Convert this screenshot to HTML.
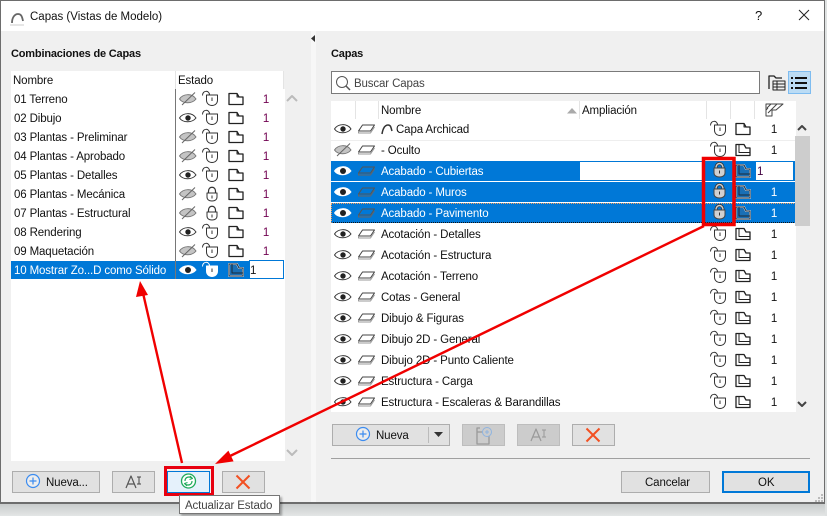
<!DOCTYPE html>
<html><head><meta charset="utf-8"><style>
html,body{margin:0;padding:0}
body{width:827px;height:516px;position:relative;overflow:hidden;background:#dfe2e2;font:11.5px/16px "Liberation Sans",sans-serif;color:#111}
div{position:absolute;box-sizing:border-box}
.t{white-space:nowrap;height:18px;line-height:18px;letter-spacing:-.13px}
.w{color:#fff}
.b{background:#e1e1e1;border:1px solid #adadad;text-align:center;height:22px;line-height:19px}
.d{background:#ccc;border-color:#bdbdbd}
.n{width:10px;text-align:center;color:#700050}
.m{width:10px;text-align:center;color:#111}
svg{position:absolute;left:0;top:0}
</style></head><body>
<div style="left:0;top:0;width:826px;height:504px;background:#f0f0f0;border:1px solid #6d6d6d;border-width:1px 2px 2px 1px"></div>
<div style="left:1px;top:1px;width:823px;height:30px;background:#fff"></div>
<div style="left:311px;top:31px;width:5px;height:471px;background:#f7f7f7"></div>
<div style="left:0;top:504px;width:827px;height:12px;background:linear-gradient(#c9cccc,#e3e6e6)"></div>
<div style="left:825px;top:0;width:2px;height:516px;background:#dfe2e2"></div>

<div style="left:11px;top:71px;width:272px;height:18px;background:#fff"></div>
<div style="left:11px;top:89px;width:274px;height:372px;background:#fff"></div>
<div style="left:11px;top:261px;width:164px;height:18px;background:#0078d7"></div>
<div style="left:176px;top:261px;width:73px;height:18px;background:#0078d7"></div>
<div style="left:249px;top:260px;width:35px;height:19px;background:#fff;border:1px solid #0078d7"></div>
<div style="left:175px;top:71px;width:1px;height:18px;background:#e4e4e4"></div>
<div style="left:175px;top:89px;width:1px;height:190px;background:#777"></div>
<div style="left:283px;top:71px;width:1px;height:18px;background:#e4e4e4"></div>

<div style="left:331px;top:71px;width:429px;height:23px;background:#fff;border:1px solid #7a7a7a"></div>
<div style="left:331px;top:101px;width:465px;height:311px;background:#fff"></div>
<div style="left:331px;top:140px;width:465px;height:1px;background:#eee"></div>
<div style="left:331px;top:161px;width:465px;height:20px;background:#0078d7"></div>
<div style="left:331px;top:182px;width:465px;height:20px;background:#0078d7"></div>
<div style="left:331px;top:203px;width:465px;height:20px;background:#0078d7;border:1px dotted #f0a060;border-bottom-color:#111"></div>
<div style="left:580px;top:162px;width:122px;height:18px;background:#fff"></div>
<div style="left:756px;top:162px;width:37px;height:18px;background:#fff"></div>
<div style="left:355px;top:101px;width:1px;height:18px;background:#e4e4e4"></div>
<div style="left:378px;top:101px;width:1px;height:18px;background:#e4e4e4"></div>
<div style="left:579px;top:101px;width:1px;height:18px;background:#e4e4e4"></div>
<div style="left:706px;top:101px;width:1px;height:18px;background:#e4e4e4"></div>
<div style="left:730px;top:101px;width:1px;height:18px;background:#e4e4e4"></div>
<div style="left:754px;top:101px;width:1px;height:18px;background:#e4e4e4"></div>
<div style="left:795px;top:136px;width:15px;height:90px;background:#cdcdcd"></div>
<div style="left:788px;top:71px;width:23px;height:23px;background:#bbdcf5;border:1px solid #7ebcf0"></div>

<div style="left:331px;top:458px;width:479px;height:1px;background:#a0a0a0"></div>

<div class="b" style="left:12px;top:471px;width:88px"></div>
<div class="b" style="left:112px;top:471px;width:43px"></div>
<div class="b" style="left:167px;top:471px;width:43px;background:#e5f1fb;border-color:#0078d7"></div>
<div style="left:164px;top:466px;width:50px;height:30px;border:3px solid #e8000f"></div>
<div class="b" style="left:222px;top:471px;width:43px"></div>
<div class="b" style="left:332px;top:424px;width:118px"></div>
<div style="left:428px;top:427px;width:1px;height:16px;background:#bbb"></div>
<div class="b d" style="left:462px;top:424px;width:43px"></div>
<div class="b d" style="left:517px;top:424px;width:43px"></div>
<div class="b" style="left:572px;top:424px;width:43px"></div>
<div class="b" style="left:621px;top:471px;width:89px"></div>
<div class="b" style="left:722px;top:471px;width:88px;border:2px solid #0078d7"></div>
<div style="left:179px;top:495px;width:101px;height:19px;background:#fff;border:1px solid #767676;box-shadow:2px 2px 2px rgba(0,0,0,.3)"></div>

<svg width="827" height="516" viewBox="0 0 827 516" fill="none" stroke-linejoin="round">
<defs>
<g id="e"><path d="M-8.500 0C-5 -5.500 4 -6 8 0C4 5 -5 5 -8.500 0Z" fill="#fff" stroke="#333"/><circle r="2.700" fill="#222"/></g>
<g id="ew"><path d="M-8.500 0C-5 -5.500 4 -6 8 0C4 5 -5 5 -8.500 0Z" fill="#fff" stroke="#fff"/><circle r="3" fill="#222"/></g>
<g id="x"><path d="M-8.500 0C-5 -5.500 4 -6 8 0C4 5 -5 5 -8.500 0Z" fill="#c4c4c4" stroke="#777"/><path d="M-6 6L7 -6.500" stroke="#666"/></g>
<g id="l"><path d="M-3.500 -4H7.500V1C7.500 4.500 5 6.500 2 6.500S-3.500 4.500 -3.500 1Z" fill="#fff" stroke="#333"/><path d="M-7.500 -3.500C-7.500 -9 -.5 -9 -.5 -4" stroke="#333"/><path d="M2 -1.500V2" stroke="#333"/></g>
<g id="lw"><path d="M-3.500 -4H7.500V1C7.500 4.500 5 6.500 2 6.500S-3.500 4.500 -3.500 1Z" fill="#fff" stroke="#fff"/><path d="M-7.500 -3.500C-7.500 -9 -.5 -9 -.5 -4" stroke="#fff"/><path d="M2 -1.500V2" stroke="#333"/></g>
<g id="c"><path d="M-3.500 -3C-3.500 -9 3.500 -9 3.500 -3" stroke="#333" stroke-width="3"/><path d="M-3.500 -3C-3.500 -9 3.500 -9 3.500 -3" stroke="#ccc" stroke-width="1.400"/><path d="M-5.500 -3H5.500V2C5.500 4.500 3 6 0 6S-5.500 4.500 -5.500 2Z" fill="#d0d0d0" stroke="#444"/><path d="M0 -.5V2.500" stroke="#333"/></g>
<g id="cd"><path d="M-3.500 -1V-3C-3.500 -8 3.500 -8 3.500 -3V-1" stroke="#333" stroke-width="1.200"/><path d="M-5 -1H5V3C5 5.500 3 7 0 7S-5 5.500 -5 3Z" fill="#fff" stroke="#333"/><path d="M0 1.500V4.500" stroke="#333"/></g>
<g id="p"><path d="M-7 -5.500H1L3 -2H7V5.500H-7Z" fill="#fff" stroke="#222" stroke-width="1.300"/><path d="M1 -5.500V-2H3" stroke="#222"/></g>
<g id="q"><path d="M-7 -5.500H1L3 -2H7V5.500H-7Z" fill="#fff" stroke="#222" stroke-width="1.300"/><path d="M-4 -5.500V2.500H7" stroke="#222"/></g>
<g id="qs"><path d="M-7 -6H1L3 -2H7V6H-7Z" fill="#1a6fb5" stroke="#cfe0f0" stroke-width="2"/><path d="M-7 -6H1L3 -2H7V6H-7Z" stroke="#1c2a38" stroke-width="1"/><path d="M-4 -6V3H7" stroke="#1c2a38"/></g>
<g id="a"><path d="M-4.500 -4H7.500L3.500 2H-8.500Z" fill="#fff" stroke="#444"/><path d="M-8.500 2V4H3.500L7.500 -2" stroke="#999"/></g>
<g id="as"><path d="M-4.500 -4H7.500L3.500 2H-8.500Z" stroke="#555"/><path d="M-8.500 2.500V4H3.500L7.500 -2" stroke="#666"/></g>
<g id="o"><circle r="6.500" stroke="#3c8cf0" stroke-width="1.200" fill="#fff" fill-opacity=".4"/><path d="M-3.500 0H3.500M0 -3.500V3.500" stroke="#3c8cf0" stroke-width="1.200"/></g>
<g id="rx"><path d="M-6.500 -6.500L6.500 6.500M6.500 -6.500L-6.500 6.500" stroke="#f25022" stroke-width="2"/></g>
<g id="u"><path d="M-5 3L0 -2L5 3" stroke="#bbb" stroke-width="2"/></g>
</defs>

<path d="M12 23C12 17 15 14 18 14C21 14 22 16 23 21" stroke="#666" stroke-width="1.800"/>
<path d="M10 25H24" stroke="#e6e6e6" stroke-width="2"/>
<path d="M799 10L809 20M809 10L799 20" stroke="#222"/>
<path d="M315 35V42L311 38.500Z" fill="#333"/>

<use href="#x" x="188" y="99"/><use href="#l" x="210" y="99"/><use href="#p" x="236" y="99"/>
<use href="#e" x="188" y="118"/><use href="#l" x="210" y="118"/><use href="#p" x="236" y="118"/>
<use href="#x" x="188" y="137"/><use href="#l" x="210" y="137"/><use href="#p" x="236" y="137"/>
<use href="#x" x="188" y="156"/><use href="#l" x="210" y="156"/><use href="#p" x="236" y="156"/>
<use href="#e" x="188" y="175"/><use href="#l" x="210" y="175"/><use href="#p" x="236" y="175"/>
<use href="#x" x="188" y="194"/><use href="#cd" x="212" y="194"/><use href="#p" x="236" y="194"/>
<use href="#x" x="188" y="213"/><use href="#cd" x="212" y="213"/><use href="#p" x="236" y="213"/>
<use href="#e" x="188" y="232"/><use href="#l" x="210" y="232"/><use href="#p" x="236" y="232"/>
<use href="#x" x="188" y="251"/><use href="#l" x="210" y="251"/><use href="#p" x="236" y="251"/>
<use href="#ew" x="188" y="270"/><use href="#lw" x="210" y="270"/><use href="#qs" x="236" y="270"/>
<use href="#u" x="292" y="98"/>
<path d="M287 450L292 455L297 450" stroke="#bbb" stroke-width="2"/>

<circle cx="342" cy="82" r="5.500" stroke="#555" fill="#fff"/><path d="M346 86L350 90" stroke="#555" stroke-width="1.500"/>
<path d="M769 89V76H774L776 78H782" stroke="#222" stroke-width="1.300"/><path d="M773 81H785V90H773Z" stroke="#222"/><path d="M773 84H785M773 87H785M777 81V90" stroke="#222"/>
<path d="M791 78H793M795 78H807M791 83H793M795 83H807M791 88H793M795 88H807" stroke="#111" stroke-width="2"/>
<path d="M567 113.500L572 108L577 113.500Z" fill="#aaa"/>
<path d="M766 104H783L776 110H772V116H766Z" fill="#fff" stroke="#444"/><path d="M767 108L771 104M768 113L777 104M766 110L768 108" stroke="#444"/>
<path d="M798 130L802 126L806 130" stroke="#444" stroke-width="2"/>
<path d="M798 402L802 406L806 402" stroke="#444" stroke-width="2"/>

<use href="#e" x="343" y="129"/><use href="#a" x="367" y="129"/><use href="#l" x="718" y="129"/><use href="#p" x="743" y="129"/>
<use href="#x" x="343" y="150"/><use href="#a" x="367" y="150"/><use href="#l" x="718" y="150"/><use href="#q" x="743" y="150"/>
<use href="#ew" x="343" y="171"/><use href="#as" x="367" y="171"/><use href="#c" x="719.500" y="171"/><use href="#qs" x="743" y="171"/>
<use href="#ew" x="343" y="192"/><use href="#as" x="367" y="192"/><use href="#c" x="719.500" y="192"/><use href="#qs" x="743" y="192"/>
<use href="#ew" x="343" y="213"/><use href="#as" x="367" y="213"/><use href="#c" x="719.500" y="213"/><use href="#qs" x="743" y="213"/>
<use href="#e" x="343" y="234"/><use href="#a" x="367" y="234"/><use href="#l" x="718" y="234"/><use href="#q" x="743" y="234"/>
<use href="#e" x="343" y="255"/><use href="#a" x="367" y="255"/><use href="#l" x="718" y="255"/><use href="#q" x="743" y="255"/>
<use href="#e" x="343" y="276"/><use href="#a" x="367" y="276"/><use href="#l" x="718" y="276"/><use href="#q" x="743" y="276"/>
<use href="#e" x="343" y="297"/><use href="#a" x="367" y="297"/><use href="#l" x="718" y="297"/><use href="#q" x="743" y="297"/>
<use href="#e" x="343" y="318"/><use href="#a" x="367" y="318"/><use href="#l" x="718" y="318"/><use href="#q" x="743" y="318"/>
<use href="#e" x="343" y="339"/><use href="#a" x="367" y="339"/><use href="#l" x="718" y="339"/><use href="#q" x="743" y="339"/>
<use href="#e" x="343" y="360"/><use href="#a" x="367" y="360"/><use href="#l" x="718" y="360"/><use href="#q" x="743" y="360"/>
<use href="#e" x="343" y="381"/><use href="#a" x="367" y="381"/><use href="#l" x="718" y="381"/><use href="#q" x="743" y="381"/>
<use href="#e" x="343" y="402"/><use href="#a" x="367" y="402"/><use href="#l" x="718" y="402"/><use href="#q" x="743" y="402"/>
<path d="M382 134C383 128 385 125 388 125C391 125 391 128 392 131" stroke="#333" stroke-width="1.500"/>

<use href="#o" x="33" y="481"/>
<use href="#o" x="363" y="434"/>
<path d="M434 432H443L438.500 437Z" fill="#333"/>
<path d="M126 488L131 476L136 488M128 484H134" stroke="#555" stroke-width="1.200"/>
<path d="M137 477H141M139 477V484M137 484H141" stroke="#444"/>
<path d="M531 441L536 429L541 441M533 437H539" stroke="#999" stroke-width="1.200"/>
<path d="M542 430H546M544 430V437M542 437H546" stroke="#999"/>
<path d="M480 428H477V444H489V436M477 432H484" stroke="#999" stroke-width="1.300"/>
<circle cx="487" cy="432" r="4.500" stroke="#8fb4e0" fill="#ccc"/><path d="M485 432H489M487 430V434" stroke="#8fb4e0"/>
<circle cx="188.500" cy="481" r="7" stroke="#1eaa5a" stroke-width="1.300" fill="#fff"/>
<path d="M185 481C185 477 189 476 192 478M192 481C192 485 188 486 185 484" stroke="#1eaa5a" stroke-width="1.200"/>
<path d="M190 476L192.500 478.500L189.500 479.500M187 486L184.500 483.500L187.500 482.500" stroke="#1eaa5a"/>
<use href="#rx" x="243" y="482"/>
<use href="#rx" x="593" y="435"/>
<path d="M815 502h2v-2h-2zM818 502h2v-2h-2zM821 502h2v-2h-2zM818 499h2v-2h-2zM821 499h2v-2h-2zM821 496h2v-2h-2z" fill="#bbb"/>
</svg>

<div class="t" style="left:30px;top:8px;letter-spacing:0">Capas (Vistas de Modelo)</div>
<div class="t" style="left:755px;top:7px;font-size:13px">?</div>
<div class="t" style="left:11px;top:45px;font-weight:bold;font-size:11px;letter-spacing:-.18px">Combinaciones de Capas</div>
<div class="t" style="left:331px;top:45px;font-weight:bold;font-size:11px;letter-spacing:-.18px">Capas</div>
<div class="t" style="left:13px;top:72px">Nombre</div>
<div class="t" style="left:178px;top:72px">Estado</div>

<div class="t" style="left:14px;top:91px">01 Terreno</div>
<div class="t" style="left:14px;top:110px">02 Dibujo</div>
<div class="t" style="left:14px;top:129px">03 Plantas - Preliminar</div>
<div class="t" style="left:14px;top:148px">04 Plantas - Aprobado</div>
<div class="t" style="left:14px;top:167px">05 Plantas - Detalles</div>
<div class="t" style="left:14px;top:186px">06 Plantas - Mecánica</div>
<div class="t" style="left:14px;top:205px">07 Plantas - Estructural</div>
<div class="t" style="left:14px;top:224px">08 Rendering</div>
<div class="t" style="left:14px;top:243px">09 Maquetación</div>
<div class="t w" style="left:14px;top:262px">10 Mostrar Zo...D como Sólido</div>
<div class="t n" style="left:261px;top:91px">1</div>
<div class="t n" style="left:261px;top:110px">1</div>
<div class="t n" style="left:261px;top:129px">1</div>
<div class="t n" style="left:261px;top:148px">1</div>
<div class="t n" style="left:261px;top:167px">1</div>
<div class="t n" style="left:261px;top:186px">1</div>
<div class="t n" style="left:261px;top:205px">1</div>
<div class="t n" style="left:261px;top:224px">1</div>
<div class="t n" style="left:261px;top:243px">1</div>
<div class="t" style="left:250px;top:262px">1</div>

<div class="t" style="left:354px;top:75px;color:#444">Buscar Capas</div>
<div class="t" style="left:381px;top:102px">Nombre</div>
<div class="t" style="left:582px;top:102px">Ampliación</div>

<div class="t" style="left:396px;top:121px">Capa Archicad</div>
<div class="t" style="left:381px;top:142px">- Oculto</div>
<div class="t w" style="left:381px;top:163px">Acabado - Cubiertas</div>
<div class="t w" style="left:381px;top:184px">Acabado - Muros</div>
<div class="t w" style="left:381px;top:205px">Acabado - Pavimento</div>
<div class="t" style="left:381px;top:226px">Acotación - Detalles</div>
<div class="t" style="left:381px;top:247px">Acotación - Estructura</div>
<div class="t" style="left:381px;top:268px">Acotación - Terreno</div>
<div class="t" style="left:381px;top:289px">Cotas - General</div>
<div class="t" style="left:381px;top:310px">Dibujo &amp; Figuras</div>
<div class="t" style="left:381px;top:331px">Dibujo 2D - General</div>
<div class="t" style="left:381px;top:352px">Dibujo 2D - Punto Caliente</div>
<div class="t" style="left:381px;top:373px">Estructura - Carga</div>
<div class="t" style="left:381px;top:394px">Estructura - Escaleras &amp; Barandillas</div>

<div class="t m" style="left:769px;top:121px">1</div>
<div class="t m" style="left:769px;top:142px">1</div>
<div class="t" style="left:757px;top:163px;color:#400040">1</div>
<div class="t m w" style="left:769px;top:184px;color:#fff">1</div>
<div class="t m w" style="left:769px;top:205px;color:#fff">1</div>
<div class="t m" style="left:769px;top:226px">1</div>
<div class="t m" style="left:769px;top:247px">1</div>
<div class="t m" style="left:769px;top:268px">1</div>
<div class="t m" style="left:769px;top:289px">1</div>
<div class="t m" style="left:769px;top:310px">1</div>
<div class="t m" style="left:769px;top:331px">1</div>
<div class="t m" style="left:769px;top:352px">1</div>
<div class="t m" style="left:769px;top:373px">1</div>
<div class="t m" style="left:769px;top:394px">1</div>

<div class="t" style="left:46px;top:474px">Nueva...</div>
<div class="t" style="left:376px;top:427px">Nueva</div>
<div class="t" style="left:645px;top:474px">Cancelar</div>
<div class="t" style="left:758px;top:474px">OK</div>
<div class="t" style="left:185px;top:497px;color:#444">Actualizar Estado</div>

<svg width="827" height="516" viewBox="0 0 827 516" fill="none">
<path d="M703.500 158.500H734V224.500H703.500Z" stroke="#f00000" stroke-width="3.500"/>
<path d="M704 226L228 457" stroke="#f00000" stroke-width="2.400"/>
<path d="M215 464L228.400 450.600L233.600 461.400Z" fill="#f00000"/>
<path d="M182 463L143 293" stroke="#f00000" stroke-width="2.400"/>
<path d="M140 281L136 297L148 295Z" fill="#f00000"/>
</svg>
</body></html>
